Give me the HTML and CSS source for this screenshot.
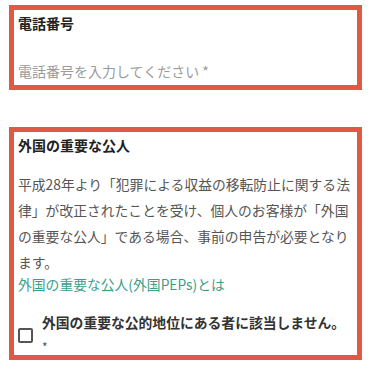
FILE: index.html
```html
<!DOCTYPE html>
<html lang="ja">
<head>
    <meta charset="UTF-8">
    <meta name="viewport" content="width=device-width, initial-scale=1.0">
    <title>お客様情報</title>
    <link rel="stylesheet" href="styles.css">
</head>
<body>
    <div class="field field-phone">
        <h3 class="field-title">電話番号</h3>
        <input type="tel" class="field-input" placeholder="電話番号を入力してください *">
    </div>

    <div class="field field-peps">
        <h3 class="field-title">外国の重要な公人</h3>
        <p class="field-note">平成28年より「犯罪による収益の移転防止に関する法律」が改正されたことを受け、個人のお客様が「外国の重要な公人」である場合、事前の申告が必要となります。</p>
        <a href="#" class="field-link">外国の重要な公人(外国PEPs)とは</a>
        <label class="check">
            <input type="checkbox" class="check-box">
            <span class="check-text">外国の重要な公的地位にある者に該当しません。<span class="check-req">*</span></span>
        </label>
    </div>
</body>
</html>
```

FILE: styles.css
```css
body {
    margin: 0;
    background: #fff;
    font-family: "Noto Sans CJK JP", "Noto Sans", sans-serif;
    color: #333;
}
.field {
    margin: 0 13px 0 9px;
    border: 5px solid #df5a45;
    padding: 3px 0 4px 4px;
}
.field-phone {
    margin-top: 5px;
}
.field-peps {
    margin-top: 37px;
    padding-bottom: 0;
}
.field-title {
    margin: 0;
    font-size: 14px;
    line-height: 20px;
    font-weight: bold;
    color: #222;
}
.field-input {
    display: block;
    width: 100%;
    box-sizing: border-box;
    margin-top: 28px;
    padding: 0;
    border: none;
    outline: none;
    font-family: inherit;
    font-size: 14px;
    line-height: 20px;
    height: 20px;
    color: #333;
}
.field-input::placeholder {
    color: #9b9b9b;
}
.field-note {
    margin: 16px 4px 0 0;
    font-size: 13.8px;
    line-height: 26px;
    color: #555;
}
.field-link {
    display: block;
    font-size: 13.8px;
    line-height: 18px;
    color: #3b9e88;
    text-decoration: none;
}
.check {
    display: flex;
    align-items: center;
    margin-top: 16px;
}
.check-box {
    appearance: none;
    -webkit-appearance: none;
    flex: none;
    width: 15px;
    height: 15px;
    margin: 6px 9px 0 0;
    border: 2px solid #555;
    border-radius: 2px;
    box-sizing: border-box;
}
.check-text {
    font-size: 13.8px;
    line-height: 26px;
    font-weight: bold;
    color: #333;
}
.check-req {
    display: block;
    padding-top: 3px;
    font-weight: normal;
    font-size: 12px;
    line-height: 17px;
    color: #555;
}
```
